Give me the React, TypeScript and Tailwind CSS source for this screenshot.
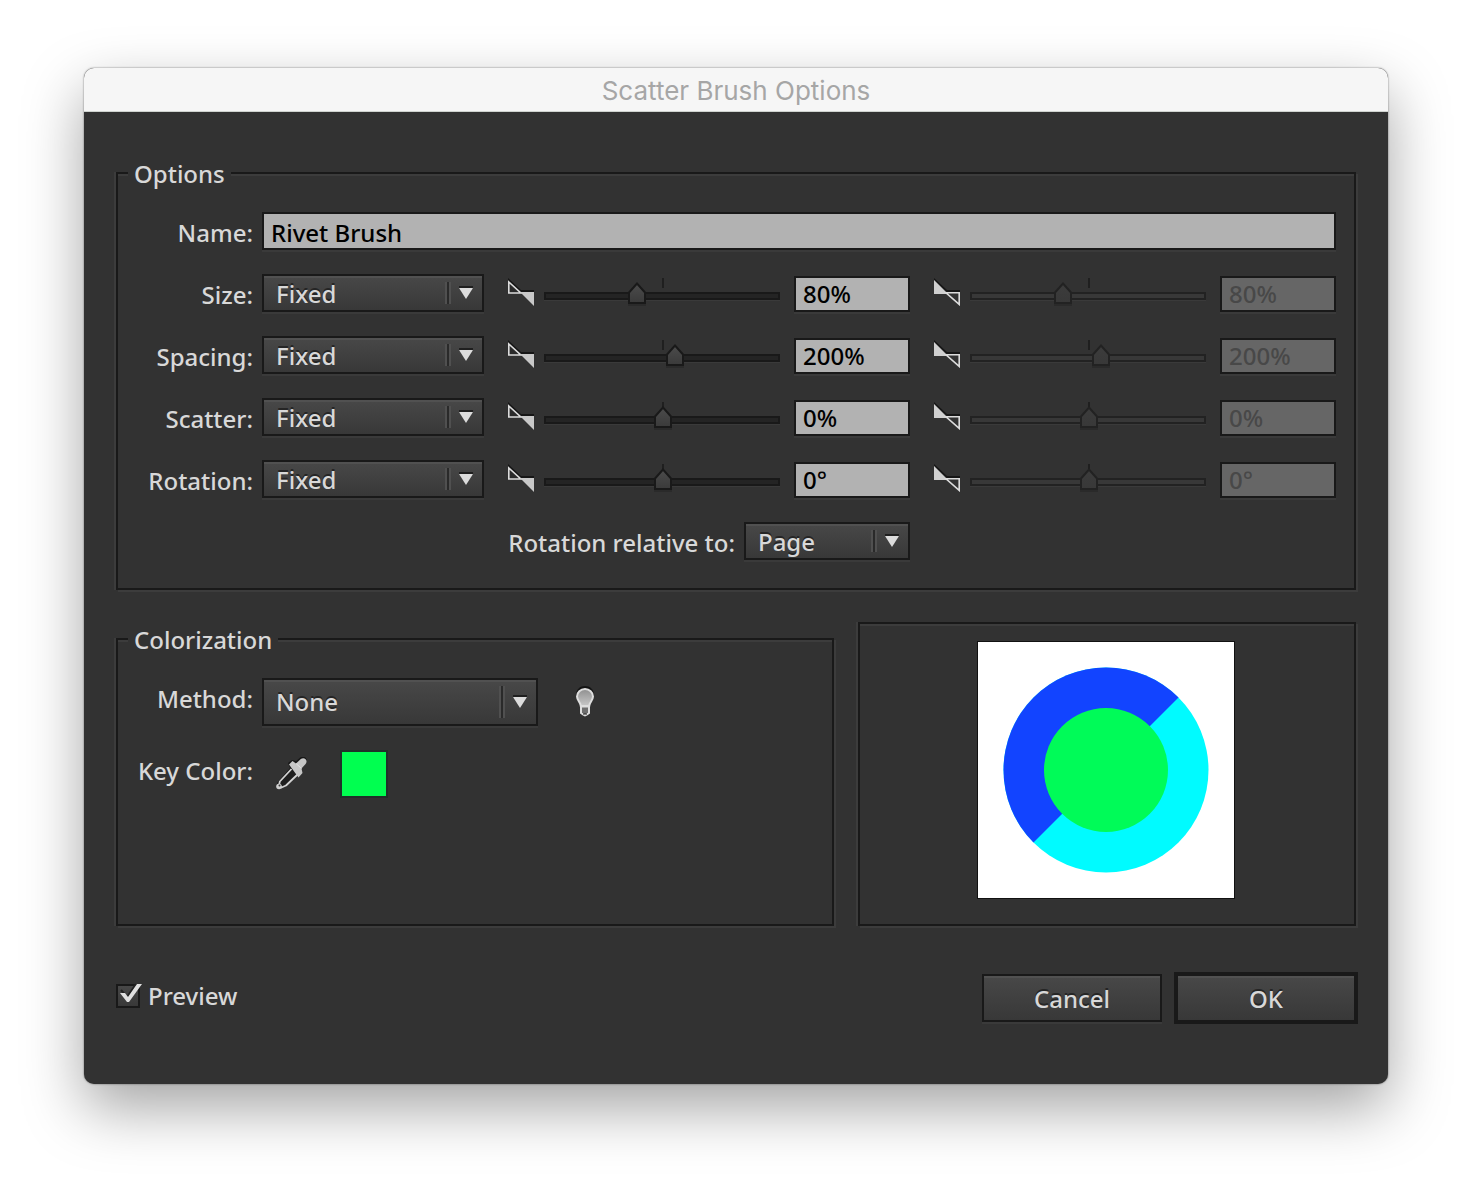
import React, { useState } from "react";

const DIVIDER = "absolute top-1.5 bottom-1.5 w-0.5 bg-[#505050]";
const LABEL = "self-center pt-1 pr-px text-right leading-8 whitespace-nowrap";

interface SelectBoxProps {
  id: string;
  options: string[];
  className?: string;
}

const SelectBox: React.FC<SelectBoxProps> = ({
  id,
  options,
  className = "h-[38px]",
}) => (
  <div
    className={`relative border-2 border-[#191919] bg-linear-to-b from-[#484848] to-[#383838] shadow-[0_2px_0_#3a3a3a,inset_0_2px_0_#515151] ${className}`}
  >
    <select
      id={id}
      className="block h-full w-full appearance-none bg-transparent pr-10 pl-3 outline-none [text-shadow:0_-2px_0_#252525]"
    >
      {options.map((option) => (
        <option key={option} className="bg-[#383838]">
          {option}
        </option>
      ))}
    </select>
    <div className="pointer-events-none absolute inset-y-0 right-0 w-10">
      <span className={`${DIVIDER} left-[3px]`} />
      <span className="absolute top-1.5 bottom-1.5 left-[5px] w-0.5 bg-[#2a2a2a]" />
      <span className={`${DIVIDER} left-[7px]`} />
      <svg
        viewBox="0 0 14 13"
        className="absolute top-1/2 right-[9px] h-[13px] w-3.5 -translate-y-[7px]"
      >
        <path d="M0 0h14v3H0z" fill="#1f1f1f" />
        <path d="M0 2h14L7 13z" fill="#dcdcdc" />
      </svg>
    </div>
  </div>
);

// Min and max markers are the same pair of triangles with the solid one swapped.
const RangeIcon: React.FC<{ max?: boolean }> = ({ max }) => (
  <svg
    viewBox="0 0 26 28"
    className="mt-1 h-7 w-[26px] shrink-0"
    aria-hidden="true"
  >
    <path d="M0 0l13 12h13v2H13L0 2z" fill="#161616" />
    {max ? (
      <>
        <path d="M0 2v14h14z" fill="#d0d0d0" />
        <path d="M12 14.8h13.2V26.4z" fill="none" stroke="#dcdcdc" strokeWidth="1.6" />
      </>
    ) : (
      <>
        <path d="M.8 4v11h12z" fill="#2a2a2a" stroke="#dcdcdc" strokeWidth="1.6" />
        <path d="M12 14h14v14z" fill="#c8c8c8" />
      </>
    )}
  </svg>
);

interface RangeProps {
  label: string;
  position: number;
  value: string;
  disabled?: boolean;
}

const RangeControl: React.FC<RangeProps> = ({
  label,
  position,
  value,
  disabled,
}) => {
  const [pos, setPos] = useState(position);
  const gradientId = `${label}-thumb`.replace(/ /g, "-");

  return (
    <div className="flex pl-4">
      <RangeIcon max={disabled} />
      <div className="relative mx-2.5 h-[38px] min-w-0 flex-1 pt-[18px]">
        <div
          className={
            disabled
              ? "h-2 border-2 border-[#222222] bg-[#383838] shadow-[0_1px_0_#3a3a3a]"
              : "h-2 border-2 border-[#191919] bg-[#242424] shadow-[0_1px_0_#3a3a3a]"
          }
        />
        <span className="absolute top-1 left-1/2 h-2.5 w-0.5 bg-[#1f1f1f]" />
        <svg
          viewBox="0 0 18 24"
          className="absolute top-2 h-6 w-[18px] -translate-x-2"
          style={{ left: `${pos}%` }}
        >
          <defs>
            <linearGradient id={gradientId} x2="0" y2="1">
              <stop stopColor={disabled ? "#3c3c3c" : "#4c4c4c"} />
              <stop offset="1" stopColor={disabled ? "#383838" : "#3a3a3a"} />
            </linearGradient>
          </defs>
          <path d="M0 22h18v2H0z" fill="#2a2a2a" />
          <path
            d="M1 10.5L9 1.5l8 9V21H1z"
            fill={`url(#${gradientId})`}
            stroke={disabled ? "#222222" : "#191919"}
            strokeWidth="2"
          />
        </svg>
        <input
          type="range"
          aria-label={label}
          min={0}
          max={100}
          step="any"
          value={pos}
          disabled={disabled}
          onChange={(e) => setPos(Number(e.target.value))}
          className="absolute inset-0 h-full w-full opacity-0"
        />
      </div>
      <input
        type="text"
        aria-label={`${label} value`}
        defaultValue={value}
        disabled={disabled}
        className="ml-1 mt-0.5 h-9 w-[116px] border-2 border-[#191919] bg-[#b2b2b2] pl-[7px] text-black shadow-[0_2px_0_#3a3a3a] outline-none disabled:bg-[#666666] disabled:text-[#484848]"
      />
    </div>
  );
};

interface GroupProps {
  title: string;
  className?: string;
  children: React.ReactNode;
}

const Group: React.FC<GroupProps> = ({ title, className = "", children }) => (
  <fieldset
    className={`min-w-0 border-2 border-[#191919] pt-[22px] pr-[18px] shadow-[-2px_0_0_#3c3c3c,2px_2px_0_#3c3c3c,inset_0_2px_0_#3c3c3c] ${className}`}
  >
    <legend className="ml-2.5 h-[34px] bg-[#323232] px-1.5 leading-9">
      {title}
    </legend>
    {children}
  </fieldset>
);

const BulbIcon = () => (
  <svg viewBox="0 0 20 32" className="ml-[37px] h-8 w-5" aria-hidden="true">
    <defs>
      <linearGradient id="bulb" x2="0" y2="1">
        <stop stopColor="#8f8f8f" />
        <stop offset="1" stopColor="#c8c8c8" />
      </linearGradient>
    </defs>
    <path d="M1 10C1 3 5 0 10 0s9 3 9 10z" fill="#141414" />
    <path
      d="M10 3C5.500 3 2 6.400 2 10.600c0 3.600 3.400 5.400 3.800 9.400h8.400c.4-4 3.800-5.800 3.800-9.400C18 6.400 14.500 3 10 3z"
      fill="url(#bulb)"
      stroke="#dedede"
      strokeWidth="2"
    />
    <path
      d="M6 20.500h8v6.500l-2 1.500-2 1-2-1L6 27z"
      fill="#6e6e6e"
      stroke="#dedede"
      strokeWidth="2"
    />
    <path d="M8 27.500h4v1H8z" fill="#222222" />
  </svg>
);

const EyedropperIcon = () => (
  <svg viewBox="0 0 32 34" className="h-[34px] w-8" aria-hidden="true">
    <path
      d="M1 26L14 11l-2-5 4-3 4 1 5-4 4 0 2 3-12 12L4 29z"
      fill="#171717"
    />
    <path
      d="M15.500 12L3.800 24.500 3 28.500l2.500 2 4.500-2L21.500 17.500"
      fill="#1e1e1e"
      stroke="#d2d2d2"
      strokeWidth="1.8"
      strokeLinejoin="round"
    />
    <circle cx="3" cy="29.500" r="2.800" fill="#cfcfcf" />
    <circle cx="3.500" cy="28.500" r="1" fill="#3c3c3c" />
    <path
      d="M13 7.500L16.500 4l3.500 2.500L24.800 2c1.600-1.300 3.800-1 4.800.2 1.300 1.400 1.200 3.400 0 4.800L25.500 11.500l1 4.500-4 4.500z"
      fill="#c6c6c6"
    />
    <path d="M20 6.500l5.500 5" stroke="#e0e0e0" strokeWidth="1" />
  </svg>
);

const BrushArtwork = () => (
  <svg
    viewBox="0 0 256 256"
    className="h-64 w-64 bg-white outline outline-[#111111]"
    role="img"
    aria-label="Brush artwork"
  >
    <circle cx="128" cy="128" r="102.500" fill="#00fbff" />
    <path
      d="M55.500 200.500A102.500 102.500 0 0 1 200.500 55.500z"
      fill="#1244ff"
    />
    <circle cx="128" cy="128" r="62" fill="#00fb58" />
  </svg>
);

const ROWS = [
  { name: "Size", position: 39, value: "80%" },
  { name: "Spacing", position: 55, value: "200%" },
  { name: "Scatter", position: 50, value: "0%" },
  { name: "Rotation", position: 50, value: "0°" },
];

const METHODS = ["Fixed", "Random", "Pressure", "Tilt", "Bearing"];

const App: React.FC = () => {
  const [preview, setPreview] = useState(true);

  return (
    <div className="min-h-screen bg-white px-[84px] pt-[68px] pb-[100px] font-['Noto_Sans','Open_Sans',sans-serif] text-[24px] font-medium text-[#d8d8d8]">
      <div className="rounded-[10px] bg-[#323232] shadow-[0_0_2px_rgba(0,0,0,0.55),0_24px_60px_rgba(0,0,0,0.36)]">
        <header className="flex h-11 items-center justify-center rounded-t-[10px] border-b border-[#cfd3cf] bg-[#f6f6f6]">
          <h1 className="pt-0.5 font-['Inter',sans-serif] text-[26px] font-normal text-[#a6a6a6]">
            Scatter Brush Options
          </h1>
        </header>

        <form
          className="px-8 pt-11 pb-[60px]"
          onSubmit={(e) => e.preventDefault()}
        >
          <Group title="Options" className="pb-7">
            <div className="grid grid-cols-[136px_222px_1fr_1fr] gap-x-2 gap-y-6">
              <label htmlFor="name" className={LABEL}>
                Name:
              </label>
              <input
                id="name"
                type="text"
                defaultValue="Rivet Brush"
                className="col-span-3 h-[38px] border-2 border-[#191919] bg-[#b2b2b2] pt-0.5 pl-[7px] text-black shadow-[0_2px_0_#3a3a3a] outline-none"
              />

              {ROWS.map((row) => (
                <React.Fragment key={row.name}>
                  <label htmlFor={row.name} className={LABEL}>
                    {row.name}:
                  </label>
                  <SelectBox id={row.name} options={METHODS} />
                  <RangeControl
                    label={`${row.name} minimum`}
                    position={row.position}
                    value={row.value}
                  />
                  <RangeControl
                    label={`${row.name} maximum`}
                    position={row.position}
                    value={row.value}
                    disabled
                  />
                </React.Fragment>
              ))}

              <div className="col-start-3 flex justify-end gap-2">
                <label htmlFor="relative" className={LABEL}>
                  Rotation relative to:
                </label>
                <SelectBox
                  id="relative"
                  options={["Page", "Path"]}
                  className="h-[38px] w-[166px]"
                />
              </div>
            </div>
          </Group>

          <div className="mt-8 grid grid-cols-[1fr_498px] gap-6">
            <Group title="Colorization">
              <div className="grid grid-cols-[136px_1fr] gap-x-2 gap-y-6">
                <label
                  htmlFor="method"
                  className="pr-px text-right leading-[42px] whitespace-nowrap"
                >
                  Method:
                </label>
                <div className="flex items-center">
                  <SelectBox
                    id="method"
                    options={["None", "Tints", "Tints and Shades", "Hue Shift"]}
                    className="h-12 w-[276px]"
                  />
                  <button type="button" aria-label="Colorization tips">
                    <BulbIcon />
                  </button>
                </div>

                <span className="pr-px text-right leading-[42px] whitespace-nowrap">
                  Key Color:
                </span>
                <div className="flex h-12 items-center pl-3.5">
                  <button type="button" aria-label="Pick key color">
                    <EyedropperIcon />
                  </button>
                  <button
                    type="button"
                    aria-label="Key color"
                    className="ml-8 h-12 w-12 border-2 border-[#20302a] bg-[#00ff50]"
                  />
                </div>
              </div>
            </Group>

            <div className="flex justify-center border-2 border-[#191919] pt-[18px] pr-0.5 pb-[26px] shadow-[-2px_0_0_#3c3c3c,2px_2px_0_#3c3c3c,inset_0_2px_0_#3c3c3c]">
              <BrushArtwork />
            </div>
          </div>

          <div className="mt-[46px] -mr-0.5 flex items-center gap-3">
            <label className="flex items-center gap-2 pb-1">
              <span className="relative h-6 w-6 border-2 border-[#191919] bg-linear-to-b from-[#484848] to-[#383838]">
                <input
                  type="checkbox"
                  checked={preview}
                  onChange={(e) => setPreview(e.target.checked)}
                  className="absolute inset-0 appearance-none"
                />
                {preview && (
                  <svg
                    viewBox="0 0 24 22"
                    className="pointer-events-none absolute -top-1 left-0 h-[22px] w-6"
                  >
                    <path
                      d="M3 8l6 7L18 2"
                      fill="none"
                      stroke="#222222"
                      strokeWidth="2"
                    />
                    <path
                      d="M2 11h5l3 4L19 2h5L11 20H9z"
                      fill="#e0e0e0"
                    />
                  </svg>
                )}
              </span>
              Preview
            </label>
            <button
              type="button"
              className="ml-auto h-12 w-[180px] border-2 border-[#191919] bg-linear-to-b from-[#484848] to-[#383838] pt-0.5 shadow-[0_2px_0_#3a3a3a,inset_0_2px_0_#515151] [text-shadow:0_-2px_0_#252525]"
            >
              Cancel
            </button>
            <button
              type="submit"
              className="h-[52px] w-[184px] border-4 border-[#191919] bg-linear-to-b from-[#484848] to-[#383838] pt-0.5 shadow-[inset_0_2px_0_#515151] [text-shadow:0_-2px_0_#252525]"
            >
              OK
            </button>
          </div>
        </form>
      </div>
    </div>
  );
};

export default App;
